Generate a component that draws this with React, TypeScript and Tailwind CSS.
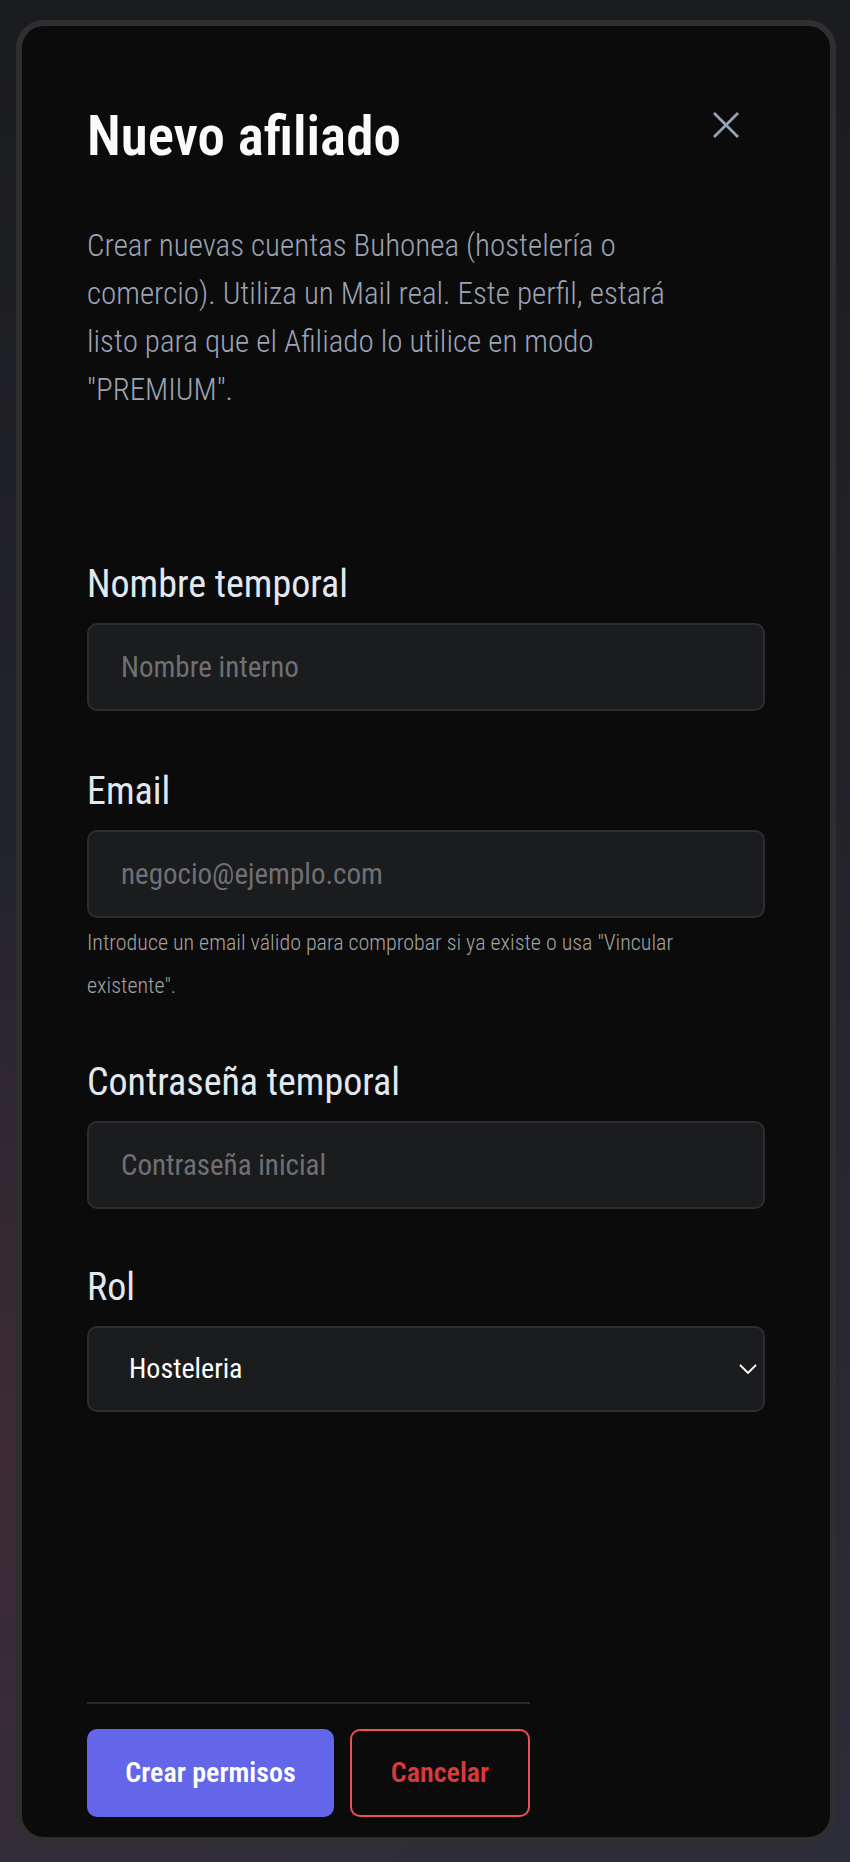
import React, { useState } from 'react';

function Field({ label, children }: { label: string; children: React.ReactNode }) {
    return (
        <div className="flex flex-col">
            <label className="mb-[20px] text-[38px] leading-none text-[#e2e8f0]">{label}</label>
            {children}
        </div>
    );
}

const inputClass =
    'h-[88px] w-full rounded-[10px] border-2 border-[#2c2d30] bg-[#1b1c1e] px-[32px] text-[29px] text-white placeholder:text-[#6e7075] outline-none';

export default function App() {
    const [rol, setRol] = useState('Hosteleria');

    return (
        <div className="flex min-h-screen flex-col bg-[radial-gradient(circle_at_0%_78%,rgba(110,45,55,0.3),transparent_35%),linear-gradient(to_bottom,#1b1c1f,#2d2d39)] pt-5 pb-[19px] pl-4 pr-[14px] font-[Roboto,sans-serif] font-stretch-condensed">
            <div className="flex flex-1 flex-col rounded-[28px] border-[6px] border-[#2f2f31] bg-[#0b0b0c] px-[65px] pt-[83px] pb-[20px]">
                {/* Header */}
                <div className="flex items-start justify-between">
                    <h1 className="text-[55px] font-semibold leading-none text-[#f8fafc]">Nuevo afiliado</h1>
                    <button className="mt-[2px] mr-[25px] text-[#94a3b8]" aria-label="Cerrar">
                        <svg width="28" height="28" viewBox="0 0 28 28" fill="none" stroke="currentColor" strokeWidth="2.8">
                            <path d="M2 2L26 26M26 2L2 26" />
                        </svg>
                    </button>
                </div>

                <p className="mt-[58px] text-[31px] font-light leading-[48px] text-[#9ca3b4]">
                    Crear nuevas cuentas Buhonea (hostelería o
                    <br />
                    comercio). Utiliza un Mail real. Este perfil, estará
                    <br />
                    listo para que el Afiliado lo utilice en modo
                    <br />
                    "PREMIUM".
                </p>

                <form className="mt-[151px] flex flex-col" onSubmit={(e) => e.preventDefault()}>
                    <Field label="Nombre temporal">
                        <input className={inputClass} placeholder="Nombre interno" />
                    </Field>

                    <div className="mt-[61px]">
                        <Field label="Email">
                            <input className={inputClass} placeholder="negocio@ejemplo.com" type="email" />
                            <p className="mt-[3px] text-[22px] font-light leading-[43px] text-[#a3a3a3]">
                                Introduce un email válido para comprobar si ya existe o usa "Vincular
                                <br />
                                existente".
                            </p>
                        </Field>
                    </div>

                    <div className="mt-[56px]">
                        <Field label="Contraseña temporal">
                            <input className={inputClass} placeholder="Contraseña inicial" type="text" />
                        </Field>
                    </div>

                    <div className="mt-[59px]">
                        <Field label="Rol">
                            <div className="relative">
                                <select
                                    value={rol}
                                    onChange={(e) => setRol(e.target.value)}
                                    className="h-[86px] w-full appearance-none rounded-[10px] border-2 border-[#2c2d30] bg-[#1b1c1e] pl-[40px] text-[28px] text-white outline-none"
                                >
                                    <option>Hosteleria</option>
                                    <option>Comercio</option>
                                </select>
                                <svg
                                    className="pointer-events-none absolute right-[8px] top-1/2 -translate-y-1/2 text-white"
                                    width="18"
                                    height="10"
                                    viewBox="0 0 18 10"
                                    fill="none"
                                    stroke="currentColor"
                                    strokeWidth="1.8"
                                >
                                    <path d="M1 1l8 8 8-8" />
                                </svg>
                            </div>
                        </Field>
                    </div>
                </form>

                {/* Footer */}
                <div className="mt-auto flex w-fit gap-4 border-t-2 border-[#2a2a2c] pt-[25px]">
                    <button className="h-[88px] w-[247px] rounded-[10px] bg-[#6366e9] text-[28px] font-semibold text-white">
                        Crear permisos
                    </button>
                    <button className="h-[88px] w-[180px] rounded-[10px] border-2 border-[#ef4f55] text-[28px] font-semibold text-[#dc3a3a]">
                        Cancelar
                    </button>
                </div>
            </div>
        </div>
    );
}
